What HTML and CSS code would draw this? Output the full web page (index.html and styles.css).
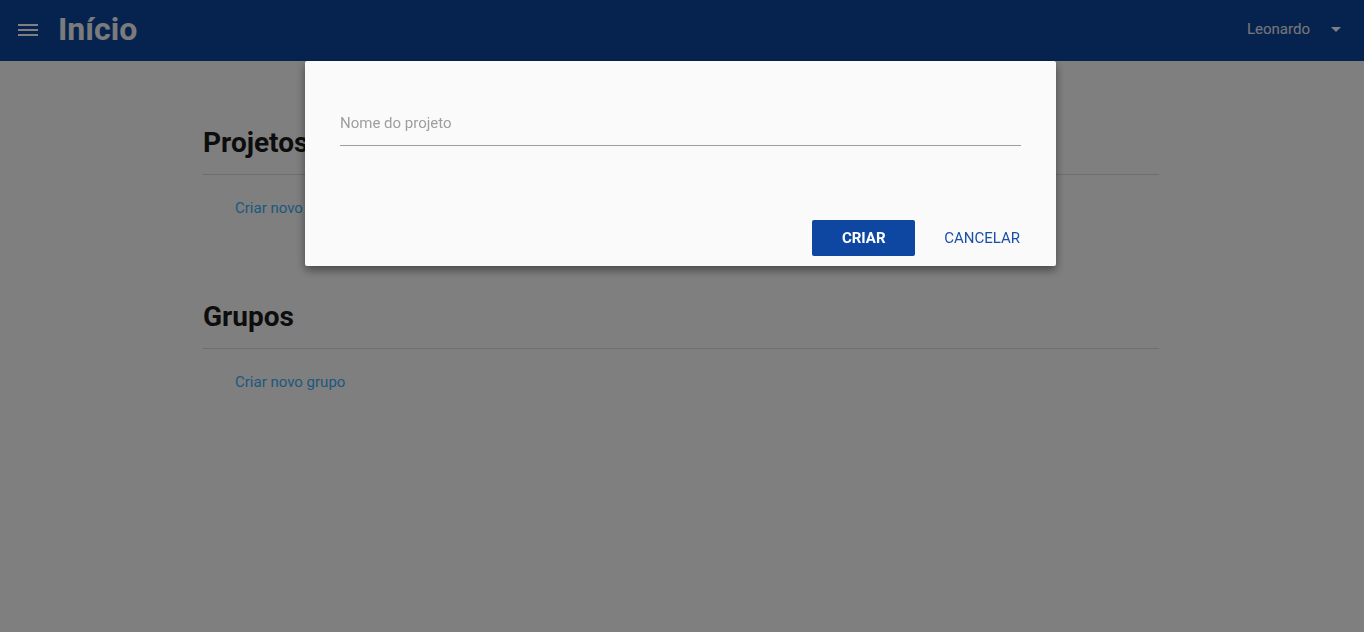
FILE: index.html
```html
<!DOCTYPE html>
<html lang="pt">
<head>
<meta charset="utf-8">
<title>Início</title>
<link rel="stylesheet" href="styles.css">
</head>
<body>
<header class="topbar">
  <button class="menu-btn" aria-label="menu">
    <svg width="20" height="12" viewBox="0 0 20 12"><rect x="0" y="0" width="20" height="2" fill="#fff"/><rect x="0" y="5" width="20" height="2" fill="#fff"/><rect x="0" y="10" width="20" height="2" fill="#fff"/></svg>
  </button>
  <h1 class="title">Início</h1>
  <div class="spacer"></div>
  <div class="user">
    <span class="user-name">Leonardo</span>
    <svg class="caret" width="10" height="5" viewBox="0 0 10 5"><path d="M0 0 L10 0 L5 5 Z" fill="#fff"/></svg>
  </div>
</header>
<main class="container">
  <section class="block">
    <h2 class="block-title">Projetos</h2>
    <hr class="divider">
    <a class="block-link" href="#">Criar novo projeto</a>
  </section>
  <section class="block">
    <h2 class="block-title">Grupos</h2>
    <hr class="divider">
    <a class="block-link" href="#">Criar novo grupo</a>
  </section>
</main>
<div class="overlay">
  <div class="dialog">
    <div class="field">
      <span class="field-label">Nome do projeto</span>
    </div>
    <div class="actions">
      <button class="btn btn-primary">CRIAR</button>
      <button class="btn btn-flat">CANCELAR</button>
    </div>
  </div>
</div>
</body>
</html>
```
FILE: styles.css
```css
* { box-sizing: border-box; }
html, body { margin: 0; padding: 0; height: 100%; }
body {
  font-family: Roboto, "Liberation Sans", Arial, sans-serif;
  background: #ffffff;
  color: #212121;
}
.topbar {
  height: 61px;
  background: #0d47a1;
  display: flex;
  align-items: center;
  padding: 0 23px 3px 18px;
  color: #fff;
}
.menu-btn {
  background: none;
  border: 0;
  padding: 0;
  width: 20px;
  height: 12px;
  display: flex;
  margin-top: 1px;
}
.title {
  margin: 0 0 0 20px;
  font-size: 32px;
  font-weight: 700;
  color: #f6f6f6;
  line-height: 1;
}
.spacer { flex: 1; }
.user { display: flex; align-items: center; }
.user-name { font-size: 15px; color: #eeeeee; }
.caret { margin-left: 21px; }
.container {
  width: 958px;
  margin: 0 auto;
  padding: 62px 2px 0 0;
}
.block { margin-bottom: 79px; }
.block-title {
  margin: 0;
  font-size: 28px;
  font-weight: 700;
  line-height: 40px;
  color: #1a1a1a;
}
.divider {
  border: 0;
  border-top: 1px solid #dcdcdc;
  margin: 11px 0 23px 0;
}
.block-link {
  display: block;
  margin-left: 32px;
  font-size: 15px;
  line-height: 20px;
  color: #3ab0fa;
  text-decoration: none;
}
.overlay {
  position: fixed;
  inset: 0;
  background: rgba(0, 0, 0, 0.5);
  display: flex;
  justify-content: center;
  align-items: flex-start;
  padding-top: 61px;
  padding-right: 3px;
}
.dialog {
  width: 751px;
  background: #fafafa;
  padding: 53px 20px 10px 35px;
  box-shadow: 0 4px 10px rgba(0, 0, 0, 0.45);
  border-radius: 2px;
}
.field {
  margin-right: 15px;
  border-bottom: 1px solid #9e9e9e;
  padding-bottom: 13px;
  height: 32px;
}
.field-label {
  display: block;
  font-size: 15px;
  line-height: 18px;
  color: #9e9e9e;
}
.actions {
  display: flex;
  justify-content: flex-end;
  gap: 13px;
  margin-top: 74px;
}
.btn {
  font-family: inherit;
  font-size: 15px;
  height: 36px;
  border: 0;
  border-radius: 2px;
  cursor: pointer;
}
.btn-primary {
  width: 103px;
  background: #0d47a1;
  color: #fff;
  font-weight: 700;
}
.btn-flat {
  background: transparent;
  color: #1a4fa6;
  padding: 0 16px;
  font-weight: 400;
}
```
